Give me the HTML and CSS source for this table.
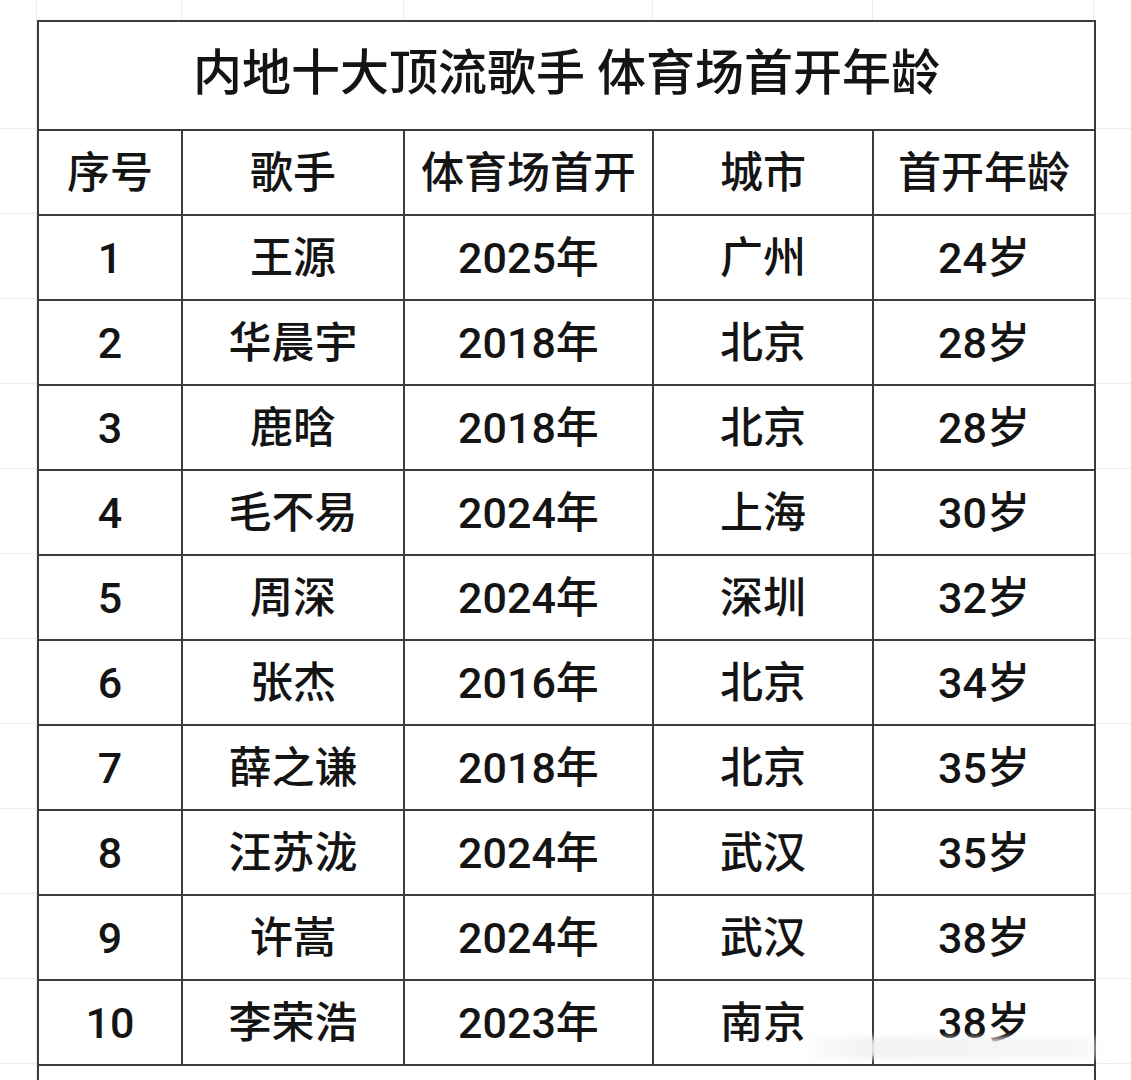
FILE: index.html
```html
<!DOCTYPE html>
<html lang="zh-CN">
<head>
<meta charset="utf-8">
<title>内地十大顶流歌手 体育场首开年龄</title>
<link rel="stylesheet" href="styles.css">
</head>
<body>
<div class="sheet">
  <table class="ranking">
    <colgroup>
      <col class="c1"><col class="c2"><col class="c3"><col class="c4"><col class="c5">
    </colgroup>
    <thead>
      <tr class="title-row"><th colspan="5">内地十大顶流歌手 体育场首开年龄</th></tr>
      <tr class="head-row"><th>序号</th><th>歌手</th><th>体育场首开</th><th>城市</th><th>首开年龄</th></tr>
    </thead>
    <tbody>
      <tr><td>1</td><td>王源</td><td>2025年</td><td>广州</td><td>24岁</td></tr>
      <tr><td>2</td><td>华晨宇</td><td>2018年</td><td>北京</td><td>28岁</td></tr>
      <tr><td>3</td><td>鹿晗</td><td>2018年</td><td>北京</td><td>28岁</td></tr>
      <tr><td>4</td><td>毛不易</td><td>2024年</td><td>上海</td><td>30岁</td></tr>
      <tr><td>5</td><td>周深</td><td>2024年</td><td>深圳</td><td>32岁</td></tr>
      <tr><td>6</td><td>张杰</td><td>2016年</td><td>北京</td><td>34岁</td></tr>
      <tr><td>7</td><td>薛之谦</td><td>2018年</td><td>北京</td><td>35岁</td></tr>
      <tr><td>8</td><td>汪苏泷</td><td>2024年</td><td>武汉</td><td>35岁</td></tr>
      <tr><td>9</td><td>许嵩</td><td>2024年</td><td>武汉</td><td>38岁</td></tr>
      <tr><td>10</td><td>李荣浩</td><td>2023年</td><td>南京</td><td>38岁</td></tr>
      <tr class="empty-row"><td colspan="5"></td></tr>
    </tbody>
  </table>
  <div class="watermark"></div>
</div>
</body>
</html>
```
FILE: styles.css
```css
html, body {
  margin: 0;
  padding: 0;
  background: #ffffff;
}

body {
  width: 1131px;
  height: 1080px;
  overflow: hidden;
  font-family: "Roboto", "Noto Sans CJK SC", sans-serif;
  color: #141414;
}

.sheet {
  position: relative;
  height: 1080px;
  padding: 20px 0 0 37px;
  box-sizing: border-box;
  background-color: #fff;
  background-image:
    linear-gradient(#ececec, #ececec),
    linear-gradient(#ececec, #ececec),
    linear-gradient(#ececec, #ececec),
    linear-gradient(#ececec, #ececec),
    linear-gradient(#ececec, #ececec),
    linear-gradient(#ececec, #ececec),
    repeating-linear-gradient(to bottom, transparent 0, transparent 84px, #ececec 84px, #ececec 85px);
  background-size:
    1px 100%, 1px 100%, 1px 100%, 1px 100%, 1px 100%, 1px 100%,
    100% 100%;
  background-position:
    36px 0, 181px 0, 403px 0, 652px 0, 872px 0, 1093px 0,
    0 44px;
  background-repeat: no-repeat;
}

.ranking {
  border-collapse: collapse;
  table-layout: fixed;
  width: 1057px;
  background: #fff;
}

.c1 { width: 144px; }
.c2 { width: 222px; }
.c3 { width: 249px; }
.c4 { width: 220px; }
.c5 { width: 222px; }

.ranking th,
.ranking td {
  border: 2px solid #3c3c3c;
  text-align: center;
  vertical-align: middle;
  padding: 2px 0 0;
  font-weight: 500;
  font-size: 43px;
  line-height: 1;
  height: 81px;
}

.title-row th {
  font-size: 49px;
  height: 103px;
  padding: 0 0 4px;
}

.empty-row td {
  height: 40px;
}

.watermark {
  position: absolute;
  left: 808px;
  top: 1038px;
  width: 300px;
  height: 20px;
  background: linear-gradient(to right, rgba(235,235,235,0.2), rgba(240,240,240,0.9) 20%, rgba(245,245,245,0.9) 90%, rgba(255,255,255,0));
  filter: blur(3px);
}
```
